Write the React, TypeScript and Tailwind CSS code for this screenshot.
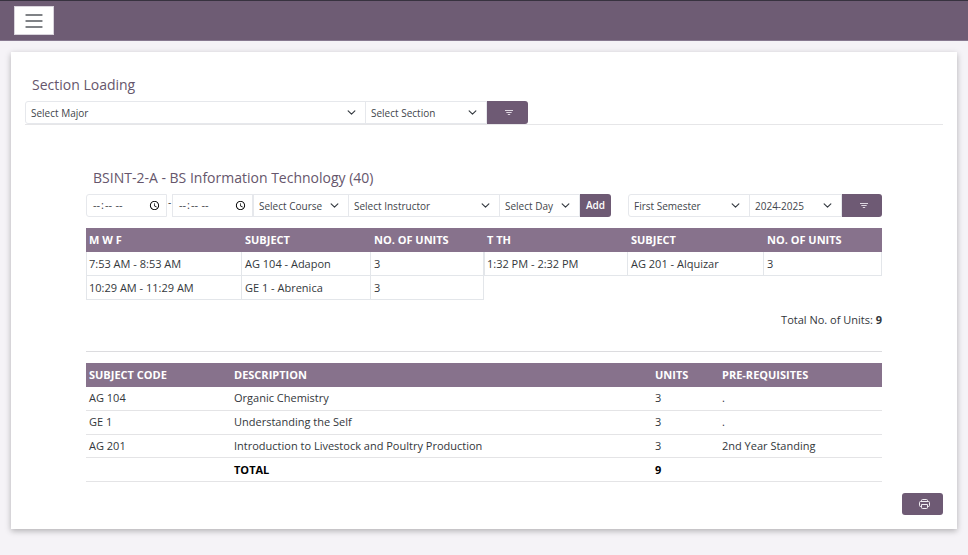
import type { ReactNode } from "react";

function Chevron() {
  return (
    <svg
      viewBox="0 0 16 16"
      className="pointer-events-none col-start-1 row-start-1 mr-[9px] size-[9px] self-center justify-self-end"
      fill="none"
      stroke="#343a40"
      strokeWidth="2"
      strokeLinecap="round"
      strokeLinejoin="round"
      aria-hidden="true"
    >
      <path d="m2 5 6 6 6-6" />
    </svg>
  );
}

function FilterIcon() {
  return (
    <svg viewBox="0 0 8 5" className="h-[5px] w-2" stroke="#ded7e1" strokeWidth="1" aria-hidden="true">
      <path d="M0 .5h8M1.3 2.5h5.4M2.8 4.5h2.4" />
    </svg>
  );
}

function PrinterIcon() {
  return (
    <svg viewBox="0 0 11 10" className="h-[10px] w-[11px]" fill="none" stroke="#f1edf3" strokeWidth="1" strokeLinejoin="round" aria-hidden="true">
      <path d="M2.5 2.5v-1a1 1 0 0 1 1-1h4a1 1 0 0 1 1 1v1" />
      <path d="M2.5 7.5h-1a1 1 0 0 1-1-1v-3a1 1 0 0 1 1-1h8a1 1 0 0 1 1 1v3a1 1 0 0 1-1 1h-1" />
      <path d="M2.5 5.5h6v3a1 1 0 0 1-1 1h-4a1 1 0 0 1-1-1z" />
    </svg>
  );
}

function Select({ label, value, className = "" }: { label: string; value: string; className?: string }) {
  return (
    <div className={`grid h-full min-w-0 overflow-hidden border border-[#e6e8ec] bg-white ${className}`}>
      <select
        aria-label={label}
        className="col-start-1 row-start-1 w-full appearance-none bg-transparent pt-0.5 pr-5 pl-[5px] text-[10px] text-[#3f454b] outline-none"
      >
        <option>{value}</option>
      </select>
      <Chevron />
    </div>
  );
}

function TimeInput({ label, className = "" }: { label: string; className?: string }) {
  return (
    <input
      type="time"
      aria-label={label}
      className={`h-full w-[81px] border border-[#e6e8ec] bg-white pr-0.5 pl-[5px] text-[11px] text-[#3f454b] outline-none ${className}`}
    />
  );
}

function ActionButton({ label, className = "", children }: { label: string; className?: string; children: ReactNode }) {
  return (
    <button
      type="button"
      aria-label={label}
      className={`flex h-full shrink-0 items-center justify-center bg-[#6e5a74] text-[10px] font-semibold text-white ${className}`}
    >
      {children}
    </button>
  );
}

type Schedule = { time: string; subject: string; units: number };

const mwf: Schedule[] = [
  { time: "7:53 AM - 8:53 AM", subject: "AG 104 - Adapon", units: 3 },
  { time: "10:29 AM - 11:29 AM", subject: "GE 1 - Abrenica", units: 3 },
];

const tth: Schedule[] = [{ time: "1:32 PM - 2:32 PM", subject: "AG 201 - Alquizar", units: 3 }];

const subjects = [
  { code: "AG 104", description: "Organic Chemistry", units: 3, prerequisites: "." },
  { code: "GE 1", description: "Understanding the Self", units: 3, prerequisites: "." },
  { code: "AG 201", description: "Introduction to Livestock and Poultry Production", units: 3, prerequisites: "2nd Year Standing" },
];

function ScheduleTable({ days, rows, widths }: { days: string; rows: Schedule[]; widths: string[] }) {
  return (
    <table className="w-1/2 table-fixed border-separate border-spacing-0 text-[11px] leading-4 text-[#33373b]">
      <colgroup>
        {widths.map((width, i) => (
          <col key={i} className={width} />
        ))}
      </colgroup>
      <thead>
        <tr className="h-6 bg-[#87728c] text-left text-white">
          <th className="pl-[3px] font-bold">{days}</th>
          <th className="pl-[3px] font-bold">SUBJECT</th>
          <th className="pl-[3px] font-bold">NO. OF UNITS</th>
        </tr>
      </thead>
      <tbody>
        {rows.map((row) => (
          <tr key={row.time} className="h-6">
            <td className="border-x border-b border-[#e3e6ea] pl-[2px]">{row.time}</td>
            <td className="border-r border-b border-[#e3e6ea] pl-[3px]">{row.subject}</td>
            <td className="border-r border-b border-[#e3e6ea] pl-[3px]">{row.units}</td>
          </tr>
        ))}
      </tbody>
    </table>
  );
}

export default function App() {
  return (
    <div className="min-h-screen bg-[#f5f3f7] font-['Open_Sans','Noto_Sans',sans-serif]">
      <header className="flex h-[41px] items-center border-t border-b border-t-[#37323f] border-b-[#877990] bg-[#6e5c74] px-[14px]">
        <button type="button" aria-label="Toggle menu" className="flex h-[29px] w-10 items-center justify-center border border-[#d9d4dc] bg-white">
          <svg viewBox="0 0 18 14" className="h-[14px] w-[18px]" stroke="#555a5f" strokeWidth="1.3" strokeLinecap="round" aria-hidden="true">
            <path d="M1 1h16M1 7h16M1 13h16" />
          </svg>
        </button>
      </header>

      <main className="mx-[11px] mt-[11px] bg-white px-[14px] pt-[22px] pb-[14px] shadow-[0_2px_6px_rgba(0,0,0,0.28)]">
        <h1 className="pl-[7px] text-[14px] leading-[22px] text-[#66566c]">Section Loading</h1>
        <div className="mt-[5px] border-b border-[#e6e6e8]">
          <div className="flex h-[23px] w-[503px]">
            <Select label="Major" value="Select Major" className="flex-1 rounded-l-[3px]" />
            <Select label="Section" value="Select Section" className="-ml-px w-[122px]" />
            <ActionButton label="Filter sections" className="w-[41px] rounded-r-[3px] pl-[3px]">
              <FilterIcon />
            </ActionButton>
          </div>
        </div>

        <section className="mx-[61px] pt-[42px]">
          <h2 className="pl-[7px] text-[14px] leading-[22px] text-[#66566c]">BSINT-2-A - BS Information Technology (40)</h2>
          <div className="mt-[5px] flex h-[23px]">
            <TimeInput label="Start time" className="rounded-l-[3px]" />
            <span className="w-[5px] text-center text-[10px] leading-4 text-[#33373b]">-</span>
            <TimeInput label="End time" />
            <Select label="Course" value="Select Course" className="w-[96px]" />
            <Select label="Instructor" value="Select Instructor" className="-ml-px flex-1" />
            <Select label="Day" value="Select Day" className="-ml-px w-[81px]" />
            <ActionButton label="Add" className="w-[31px] rounded-r-[3px]">
              Add
            </ActionButton>
            <Select label="Semester" value="First Semester" className="ml-[17px] w-[122px] rounded-l-[3px]" />
            <Select label="School year" value="2024-2025" className="-ml-px w-[93px]" />
            <ActionButton label="Filter schedule" className="w-10 rounded-r-[3px] pl-1">
              <FilterIcon />
            </ActionButton>
          </div>

          <div className="mt-[11px] flex items-start">
            <ScheduleTable days="M W F" rows={mwf} widths={["w-[156px]", "", "w-[113px]"]} />
            <ScheduleTable days="T TH" rows={tth} widths={["w-[144px]", "", "w-[118px]"]} />
          </div>

          <p className="mt-3 text-right text-[11px] leading-4 text-[#33373b]">
            Total No. of Units: <strong className="font-bold">9</strong>
          </p>
          <hr className="mt-[23px] border-[#dcdcdf]" />

          <table className="mt-[11px] h-[119px] w-full table-fixed border-separate border-spacing-0 text-[11px] leading-4 text-[#33373b]">
            <colgroup>
              <col className="w-[145px]" />
              <col />
              <col className="w-[67px]" />
              <col className="w-[163px]" />
            </colgroup>
            <thead className="h-6">
              <tr className="h-6 bg-[#87728c] text-left text-white">
                <th className="pl-[3px] font-bold">SUBJECT CODE</th>
                <th className="pl-[3px] font-bold">DESCRIPTION</th>
                <th className="pl-[3px] font-bold">UNITS</th>
                <th className="pl-[3px] font-bold">PRE-REQUISITES</th>
              </tr>
            </thead>
            <tbody>
              {subjects.map((subject) => (
                <tr key={subject.code} className="*:border-b *:border-[#e4e4e6] *:pl-[3px]">
                  <td>{subject.code}</td>
                  <td>{subject.description}</td>
                  <td>{subject.units}</td>
                  <td>{subject.prerequisites}</td>
                </tr>
              ))}
              <tr className="font-bold text-black *:border-b *:border-[#e4e4e6] *:pl-[3px]">
                <td />
                <td>TOTAL</td>
                <td>9</td>
                <td />
              </tr>
            </tbody>
          </table>
        </section>

        <div className="mt-[11px] flex h-[22px] justify-end">
          <ActionButton label="Print" className="w-[41px] rounded-[3px] pl-1">
            <PrinterIcon />
          </ActionButton>
        </div>
      </main>
    </div>
  );
}
